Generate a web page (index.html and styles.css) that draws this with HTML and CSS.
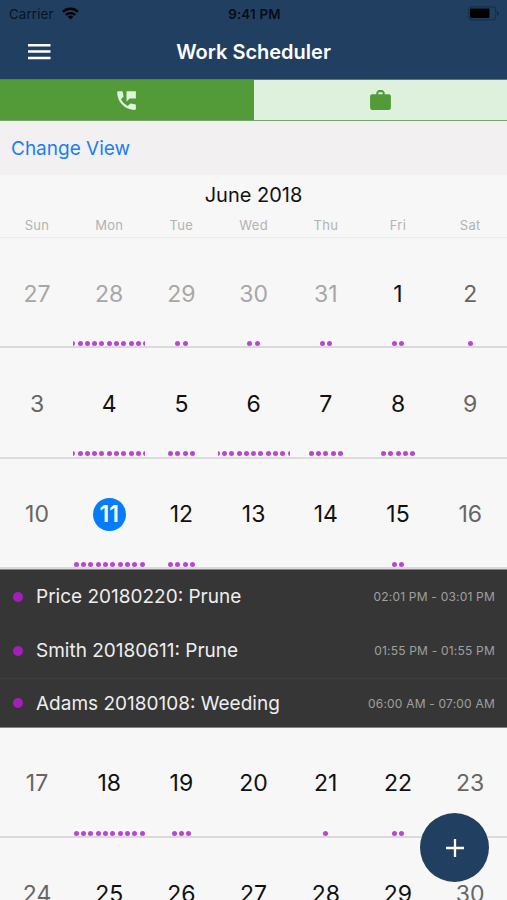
FILE: index.html
```html
<!DOCTYPE html>
<html lang="en">
<head>
<meta charset="utf-8">
<title>Work Scheduler</title>
<link rel="stylesheet" href="styles.css">
</head>
<body>
<header class="top">
  <div class="status">
    <div class="carrier"><span>Carrier</span>
      <svg width="17" height="13" viewBox="0 0 17 13"><g fill="none" stroke="#000" stroke-width="2.3"><path d="M1 4.8a10.8 10.8 0 0 1 15 0"/><path d="M3.8 8a6.7 6.7 0 0 1 9.4 0"/></g><path d="M8.5 12.5 5.7 9.8a4 4 0 0 1 5.6 0z"/></svg>
    </div>
    <span class="clock">9:41 PM</span>
    <svg class="battery" width="32" height="15" viewBox="0 0 32 15"><rect x=".7" y=".8" width="27" height="13" rx="3" fill="none" stroke="#15304e" stroke-width="1.2"/><rect x="2" y="2.6" width="19.5" height="9.4" rx="1"/><path d="M29.2 5v4.6a2.6 2.6 0 0 0 0-4.6z" fill="#0d2138"/></svg>
  </div>
  <div class="nav">
    <svg class="menu" width="23" height="16" viewBox="0 0 23 16" fill="#fff"><path d="M0 0h22.5v2.5H0zM0 6.3h22.5v2.5H0zM0 12.7h22.5v2.5H0z"/></svg>
    <h1>Work Scheduler</h1>
  </div>
</header>
<div class="tabs">
  <div class="tab active"><svg width="25" height="25" viewBox="0 0 24 24"><path d="M20 15.5c-1.25 0-2.45-.2-3.57-.57a1.02 1.02 0 0 0-1.02.24l-2.2 2.2a15.05 15.05 0 0 1-6.59-6.58l2.2-2.21c.28-.27.36-.66.25-1.01A11.36 11.36 0 0 1 8.500 4c0-.55-.45-1-1-1H4c-.55 0-1 .45-1 1 0 9.390 7.610 17 17 17 .55 0 1-.45 1-1v-3.500c0-.55-.45-1-1-1zM12 3v10l3-3h6V3h-9z"/></svg></div>
  <div class="tab"><svg width="25" height="25" viewBox="0 0 24 24"><path d="M20 6h-4V4l-2-2h-4L8 4v2H4c-1.100 0-2 .9-2 2v11c0 1.100.9 2 2 2h16c1.100 0 2-.9 2-2V8c0-1.100-.9-2-2-2zm-6 0h-4V4h4v2z"/></svg></div>
</div>
<div class="toolbar"><a class="change">Change View</a></div>
<main>
  <h2>June 2018</h2>
  <div class="weekdays"><span>Sun</span><span>Mon</span><span>Tue</span><span>Wed</span><span>Thu</span><span>Fri</span><span>Sat</span></div>
  <div id="before"></div>
  <ul class="events">
    <li><i></i><b>Price 20180220: Prune</b><time>02:01 PM - 03:01 PM</time></li>
    <li><i></i><b>Smith 20180611: Prune</b><time>01:55 PM - 01:55 PM</time></li>
    <li class="ruled"><i></i><b>Adams 20180108: Weeding</b><time class="wide">06:00 AM - 07:00 AM</time></li>
  </ul>
  <div id="after"></div>
</main>
<button class="fab" aria-label="Add"><svg width="20" height="20" viewBox="0 0 20 20"><path d="M10 1v18M1 10h18" stroke="#fff" stroke-width="2.3"/></svg></button>
<script src="calendar.js"></script>
</body>
</html>
```
FILE: styles.css
```css
* { box-sizing: border-box; margin: 0; padding: 0; }
html, body { height: 900px; overflow: hidden; }
body { background: #f7f7f7; font-family: Inter, "Liberation Sans", sans-serif; color: #111; }
svg { display: block; }
.top { height: 79px; background: #214061; }
.status { display: grid; grid-template-columns: 1fr auto 1fr; align-items: center; height: 27px; padding: 0 7px 0 9px; color: #000; }
.carrier { display: flex; align-items: center; gap: 8px; font-size: 13.3px; letter-spacing: .15px; color: #071321; }
.clock { font-size: 13.3px; font-weight: 600; letter-spacing: .25px; color: #050c16; }
.battery { justify-self: end; }
.nav { display: grid; grid-template-columns: 28px 1fr 28px; align-items: center; height: 50px; padding: 0 28px; }
.nav h1 { font-size: 20px; font-weight: 600; color: #fff; text-align: center; letter-spacing: 0; }
.tabs { display: flex; height: 42px; border-top: 1px solid #527f65; border-bottom: 1px solid #76a26b; }
.tab { flex: 1; display: flex; align-items: center; justify-content: center; background: #ddf1dc; fill: #529b38; }
.tab.active { background: #529b38; fill: #ddf5da; border-right: 1px solid #529b38; }
.toolbar { height: 54px; background: #f2f0f1; padding: 0 11px; display: flex; align-items: center; }
.change { color: #1a7ff5; font-size: 19px; }
main h2 { height: 41px; line-height: 41px; font-size: 20px; font-weight: 400; text-align: center; }
.weekdays, .week { display: grid; grid-template-columns: repeat(7, 1fr); padding: 0 .7px 0 .9px; border-bottom: 1px solid #eaeaea; }
.weekdays { height: 22px; line-height: 19px; font-size: 13px; color: #b3b3b3; text-align: center; letter-spacing: .3px; }
.week { height: 110.3px; border-bottom: 2px solid #dadada; }
.day { display: flex; flex-direction: column; align-items: center; overflow: hidden; font-size: 23px; }
.num { width: 33px; height: 33px; margin-top: 39px; border-radius: 50%; display: flex; align-items: center; justify-content: center; }
.weekend { color: #666; }
.outside { color: #a7a7a7; }
.selected .num { background: #067cfb; color: #fff; font-weight: 600; }
.dots { display: flex; justify-content: center; gap: 2.3px; margin-top: 31px; }
.dots i { flex: none; width: 5px; height: 5px; border-radius: 50%; background: #ba46d0; }
.events { list-style: none; height: 159px; background: #363636; border-top: 1px solid #858585; border-bottom: 1px solid #858585; }
.events li { display: flex; align-items: center; height: 54px; padding: 0 12px 0 13px; }
.events .ruled { height: 50px; padding-bottom: 0; border-top: 1px solid #3e3e3e; }
.events i { width: 10px; height: 10px; border-radius: 50%; background: #a41fb9; }
.events b { margin-left: 13px; font-size: 19px; font-weight: 400; color: #eee; }
.events time { margin-left: auto; font-size: 12px; letter-spacing: .2px; color: #a0a0a0; }
.fab { position: fixed; right: 18px; bottom: 18px; width: 69px; height: 69px; border: 0; border-radius: 50%; background: #214061; display: flex; align-items: center; justify-content: center; }
```
FILE: calendar.js
```js
// Each day: [number, event dots]
const before = [
  [[27, 0], [28, 11], [29, 2], [30, 2], [31, 2], [1, 2], [2, 1]],
  [[3, 0], [4, 11], [5, 4], [6, 11], [7, 5], [8, 5], [9, 0]],
  [[10, 0], [11, 10], [12, 4], [13, 0], [14, 0], [15, 2], [16, 0]]
];
const after = [
  [[17, 0], [18, 10], [19, 3], [20, 0], [21, 1], [22, 2], [23, 0]],
  [[24, 0], [25, 0], [26, 0], [27, 0], [28, 0], [29, 0], [30, 0]]
];
function render(id, weeks, first) {
  document.getElementById(id).innerHTML = weeks.map((week, w) =>
    '<div class="week">' + week.map(([n, dots], d) => {
      let cls = 'day';
      if (first && w === 0 && n > 20) cls += ' outside';
      else if (d === 0 || d === 6) cls += ' weekend';
      if (n === 11) cls += ' selected';
      return `<div class="${cls}"><span class="num">${n}</span><div class="dots">${'<i></i>'.repeat(dots)}</div></div>`;
    }).join('') + '</div>').join('');
}
render('before', before, true);
render('after', after, false);
```
